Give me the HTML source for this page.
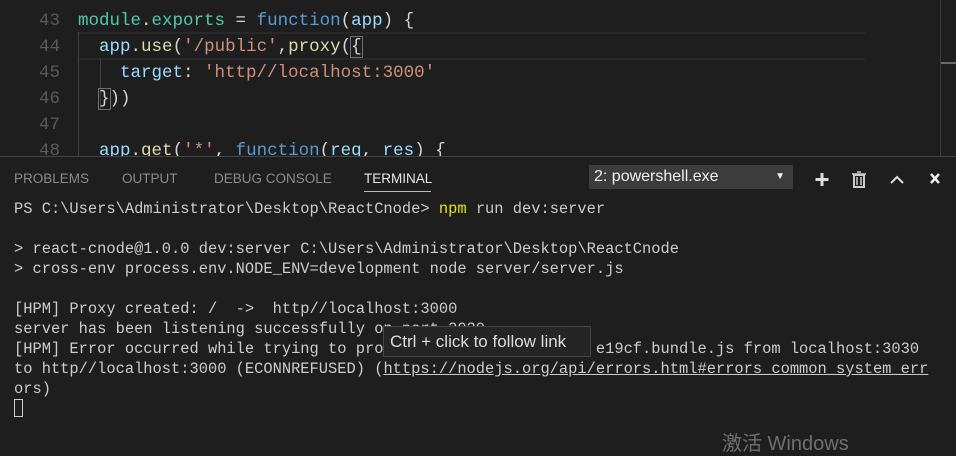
<!DOCTYPE html>
<html><head><meta charset="utf-8"><style>
body{margin:0;width:956px;height:455px;background:#1e1e1e;overflow:hidden;position:relative;font-family:"Liberation Mono",monospace}
.ed{position:absolute;left:0;top:0;width:956px;height:156px;overflow:hidden}
.ln{position:absolute;left:0;width:60px;text-align:right;font-size:17.5px;color:#5a5a5a;height:26px;line-height:26px}
.cl{position:absolute;left:78px;font-size:17.5px;height:26px;line-height:26px;white-space:pre;color:#d4d4d4}
.t{color:#4ec9b0}.k{color:#569cd6}.v{color:#9cdcfe}.f{color:#dcdcaa}.s{color:#ce9178}
.term{position:absolute;left:14px;top:199px;font-size:15.4px;line-height:20px;color:#cccccc;white-space:pre}
.tab{position:absolute;top:171px;font-family:"Liberation Sans",sans-serif;font-size:13.5px;color:#8b8b8b;font-weight:normal}
</style></head><body>
<div class="ed">
<div style="position:absolute;left:78px;top:32px;width:787px;height:24px;border-top:2px solid #282828;border-bottom:2px solid #282828"></div>
<div style="position:absolute;left:78px;top:32px;width:1px;height:124px;background:#404040"></div>
<div style="position:absolute;left:100px;top:58px;width:1px;height:52px;background:#404040"></div>
<div class="ln" style="top:8px">43</div>
<div class="ln" style="top:34px">44</div>
<div class="ln" style="top:60px">45</div>
<div class="ln" style="top:86px">46</div>
<div class="ln" style="top:112px">47</div>
<div class="ln" style="top:138px">48</div>
<div class="cl" style="top:8px"><span class="t">module</span>.<span class="t">exports</span> = <span class="k">function</span>(<span class="v">app</span>) {</div>
<div class="cl" style="top:34px">  <span class="v">app</span>.<span class="f">use</span>(<span class="s">'/public'</span>,<span class="f">proxy</span>(<span style="outline:1px solid #707070">{</span></div>
<div class="cl" style="top:60px">    <span class="v">target</span>: <span class="s">'http//localhost:3000'</span></div>
<div class="cl" style="top:86px">  <span style="outline:1px solid #707070">}</span>))</div>
<div class="cl" style="top:138px">  <span class="v">app</span>.<span class="f">get</span>(<span class="s">'*'</span>, <span class="k">function</span>(<span class="v">req</span>, <span class="v">res</span>) {</div>
<div style="position:absolute;left:940px;top:0;width:1px;height:156px;background:#3a3a3a"></div>
<div style="position:absolute;left:941px;top:62px;width:15px;height:2px;background:#6a6a6a"></div>
</div>
<div style="position:absolute;left:0;top:156px;width:956px;height:1px;background:#444"></div>
<div class="tab" style="left:14px">PROBLEMS</div>
<div class="tab" style="left:122px">OUTPUT</div>
<div class="tab" style="left:214px">DEBUG CONSOLE</div>
<div class="tab" style="left:364px;color:#e7e7e7">TERMINAL</div>
<div style="position:absolute;left:364px;top:191px;width:67px;height:1px;background:#bbb"></div>
<div style="position:absolute;left:589px;top:165px;width:204px;height:24px;background:#3c3c3c;font-family:'Liberation Sans',sans-serif;font-size:16px;color:#f0f0f0;line-height:24px;text-indent:5px">2: powershell.exe<span style="position:absolute;right:8px;font-size:10px">▼</span></div>
<svg style="position:absolute;left:812px;top:170px" width="130" height="18">
<path d="M10 3v13M3.5 9.5h13" stroke="#ddd" stroke-width="3"/>
<rect x="42" y="5" width="10" height="12" fill="none" stroke="#ccc" stroke-width="2"/><path d="M40 4h14M45 2h4M45 7v8M49 7v8" stroke="#ccc" stroke-width="1.5"/>
<path d="M79 13l6-6 6 6" fill="none" stroke="#ddd" stroke-width="2"/>
<path d="M119 4l8 9M127 4l-8 9" stroke="#eee" stroke-width="2.5"/>
</svg>
<div class="term">PS C:\Users\Administrator\Desktop\ReactCnode> <span style="color:#e5e510">npm</span> run dev:server

> react-cnode@1.0.0 dev:server C:\Users\Administrator\Desktop\ReactCnode
> cross-env process.env.NODE_ENV=development node server/server.js

[HPM] Proxy created: /  ->  http//localhost:3000
server has been listening successfully on port 3030
[HPM] Error occurred while trying to proxy request /main.a4b8d e19cf.bundle.js from localhost:3030
to http//localhost:3000 (ECONNREFUSED) (<span style="text-decoration:underline">https://nodejs.org/api/errors.html#errors_common_system_err</span>
ors)
<span style="display:inline-block;width:7px;height:16px;border:1px solid #ccc;vertical-align:-3px"></span></div>
<div style="position:absolute;left:383px;top:326px;width:206px;height:29px;background:#252526;border:1px solid #454545;font-family:'Liberation Sans',sans-serif;font-size:17px;color:#ddd;line-height:29px;text-indent:6px">Ctrl + click to follow link</div>
<div style="position:absolute;left:722px;top:427px;font-family:'Liberation Sans','Noto Sans CJK SC',sans-serif;font-size:20px;color:#6f6f6f">激活 Windows</div>
</body></html>
